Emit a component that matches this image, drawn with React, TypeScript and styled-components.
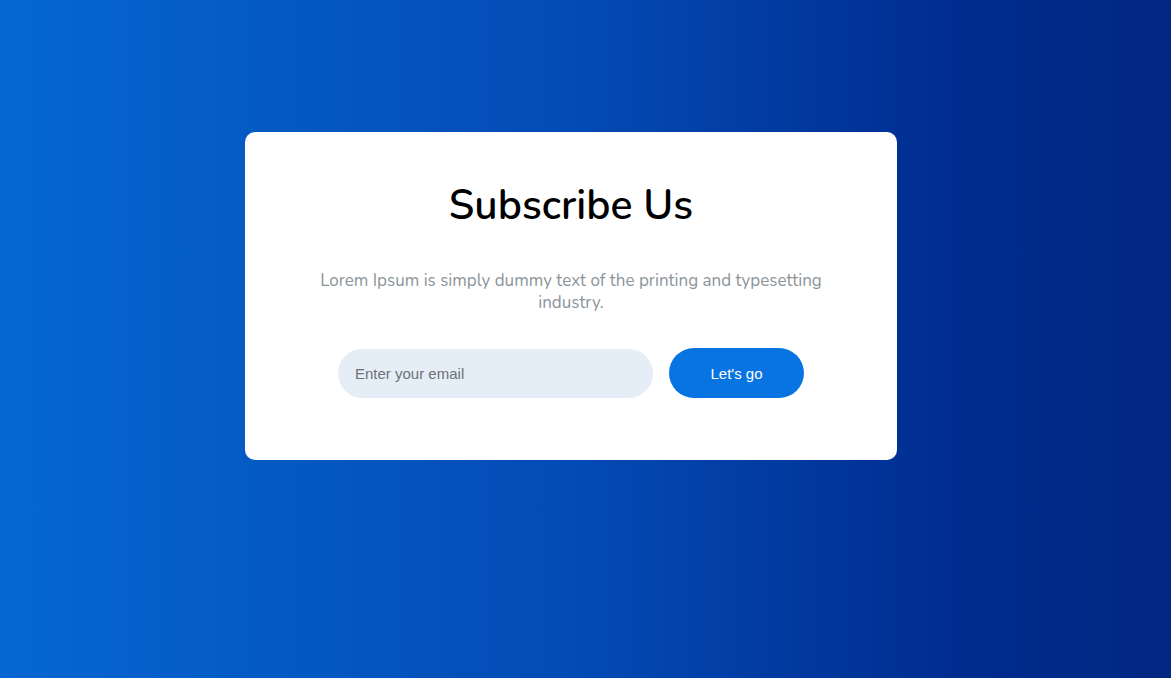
import styled, { createGlobalStyle } from "styled-components";

const GlobalStyle = createGlobalStyle`
  * { box-sizing: border-box; }
  html, body { margin: 0; padding: 0; }
  body {
    font-family: "Nunito", "Lato", "Noto Sans", sans-serif;
  }
`;

const App = () => {
  return (
    <>
      <GlobalStyle />
      <Page>
        <Card>
          <Title>Subscribe Us</Title>
          <Text>
            Lorem Ipsum is simply dummy text of the printing and typesetting
            industry.
          </Text>
          <Form onSubmit={(e) => e.preventDefault()}>
            <EmailInput type="email" placeholder="Enter your email" />
            <Button type="submit">Let's go</Button>
          </Form>
        </Card>
      </Page>
    </>
  );
};

const Page = styled.div`
  width: 100%;
  height: 678px;
  background: linear-gradient(to right, #0567d3 0%, #044ab4 50%, #002c8f 82%, #012781 100%);
  padding: 132px 0 0 245px;
`;

const Card = styled.div`
  width: 652px;
  height: 328px;
  background: #ffffff;
  border-radius: 10px;
  padding: 50px 60px 0;
  display: flex;
  flex-direction: column;
  align-items: center;
`;

const Title = styled.h2`
  margin: 0;
  font-size: 41px;
  font-weight: 600;
  line-height: 48px;
  color: #000000;
`;

const Text = styled.p`
  margin: 40px 0 0;
  max-width: 520px;
  text-align: center;
  font-size: 17px;
  line-height: 22px;
  color: #8b9499;
`;

const Form = styled.form`
  margin-top: 34px;
  display: flex;
  align-items: center;
  gap: 16px;
`;

const EmailInput = styled.input`
  width: 315px;
  height: 49px;
  border: none;
  outline: none;
  border-radius: 25px;
  background: #e5eef7;
  padding: 0 17px;
  font-family: "Liberation Sans", Arial, sans-serif;
  font-size: 15px;
  color: #333;

  &::placeholder {
    color: #6e7276;
  }
`;

const Button = styled.button`
  width: 135px;
  height: 50px;
  border: none;
  border-radius: 25px;
  background: #0774e1;
  color: #ffffff;
  font-family: "Liberation Sans", Arial, sans-serif;
  font-size: 15px;
  cursor: pointer;
`;

export default App;
